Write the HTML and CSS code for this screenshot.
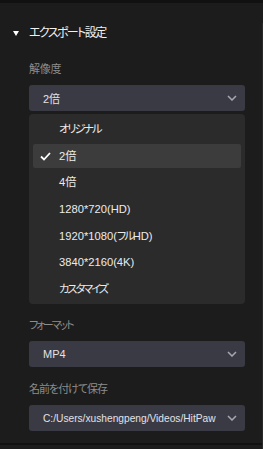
FILE: index.html
```html
<!DOCTYPE html>
<html lang="ja">
<head>
<meta charset="utf-8">
<link rel="stylesheet" href="styles.css">
</head>
<body>
<div class="topbar"></div>
<div class="panel">
  <div class="section-head">
    <svg class="tri" width="6" height="5" viewBox="0 0 6 5"><path d="M0 0H6L3 5Z" fill="#fff"/></svg>
    <span class="title">エクスポート設定</span>
  </div>
  <div class="content">
    <div class="label first">解像度</div>
    <div class="select">
      <span class="val">2倍</span>
      <svg class="chev" width="10" height="6" viewBox="0 0 10 6"><path d="M1 1L5 5L9 1" fill="none" stroke="#a8a8b0" stroke-width="1.5"/></svg>
    </div>
    <ul class="menu">
      <li class="item"><span class="kana">オリジナル</span></li>
      <li class="item active"><svg class="check" width="11" height="9" viewBox="0 0 11 9"><path d="M1 4.5L4 7.5L10 1" fill="none" stroke="#fff" stroke-width="1.8"/></svg>2倍</li>
      <li class="item">4倍</li>
      <li class="item">1280*720(HD)</li>
      <li class="item">1920*1080(<span class="kana">フル</span>HD)</li>
      <li class="item">3840*2160(4K)</li>
      <li class="item"><span class="kana">カスタマイズ</span></li>
    </ul>
    <div class="label fmt"><span class="kana">フォーマット</span></div>
    <div class="select">
      <span class="val">MP4</span>
      <svg class="chev" width="10" height="6" viewBox="0 0 10 6"><path d="M1 1L5 5L9 1" fill="none" stroke="#a8a8b0" stroke-width="1.5"/></svg>
    </div>
    <div class="label save">名前を付けて保存</div>
    <div class="select">
      <span class="val path">C:/Users/xushengpeng/Videos/HitPaw</span>
      <svg class="chev" width="10" height="6" viewBox="0 0 10 6"><path d="M1 1L5 5L9 1" fill="none" stroke="#a8a8b0" stroke-width="1.5"/></svg>
    </div>
  </div>
  <div class="bottomline"></div>
</div>
</body>
</html>
```

FILE: styles.css
```css
* { box-sizing: border-box; }
html, body {
  margin: 0;
  padding: 0;
  background: #1c1c1c;
  height: 449px;
  overflow: hidden;
}
body {
  font-family: "Liberation Sans", "Noto Sans CJK JP", sans-serif;
  font-feature-settings: "palt";
  color: #e6e6e6;
}
.topbar {
  height: 3px;
  background: #111111;
}
.panel {
  border-right: 1px solid #2a2a2a;
  height: 446px;
}
.section-head {
  display: flex;
  align-items: center;
  height: 20px;
  margin-top: 20px;
  padding-left: 13px;
}
.tri { display: block; }
.title {
  margin-left: 10px;
  font-size: 12px;
  letter-spacing: -1.6px;
  color: #f0f0f0;
  line-height: 20px;
}
.content {
  padding-left: 29px;
  width: 245px;
}
.label {
  font-size: 11px;
  line-height: 16px;
  height: 16px;
  color: #8c8c8c;
  white-space: nowrap;
}
.label.first { margin-top: 18px; letter-spacing: -0.3px; }
.label.fmt { margin-top: 13px; }
.label.save { margin-top: 14px; letter-spacing: -1px; }
.kana { letter-spacing: -2px; }
.select {
  margin-top: 8px;
  height: 26px;
  background: #3a3a44;
  border-radius: 3px;
  display: flex;
  align-items: center;
  padding: 0 8px 0 14px;
}
.val {
  flex: 1;
  font-size: 11px;
  color: #e2e2e6;
  white-space: nowrap;
  overflow: hidden;
}
.val.path {
  font-size: 10.2px;
}
.chev { display: block; margin-left: 8px; }
.menu {
  list-style: none;
  margin: 3px 0 0 0;
  padding: 3px 4px;
  height: 190px;
  background: #2b2b2b;
  border-radius: 4px;
  display: flex;
  flex-direction: column;
  gap: 2.67px;
}
.item {
  position: relative;
  height: 24px;
  line-height: 24px;
  padding-left: 26px;
  font-size: 11.2px;
  color: #ececec;
  border-radius: 2px;
  white-space: nowrap;
}
.item.active { background: #3c3c3c; }
.check {
  position: absolute;
  left: 7px;
  top: 8px;
}
.bottomline {
  margin-top: 12px;
  height: 2px;
  background: #111111;
}
```
